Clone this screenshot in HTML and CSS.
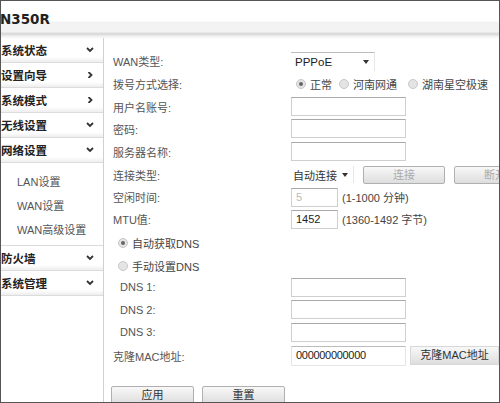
FILE: index.html
```html
<!DOCTYPE html>
<html lang="zh-CN">
<head>
<meta charset="UTF-8">
<link rel="stylesheet" href="styles.css">
</head>
<body>
<div class="frame">
  <div class="header"><span class="logo">N350R</span></div>
  <div class="main">
    <div class="sidebar">
      <div class="menu_item"><span>系统状态</span><svg class="chev" viewBox="0 0 8 6"><polyline points="1,1 4,4 7,1"/></svg></div>
      <div class="menu_item"><span>设置向导</span><svg class="chev" viewBox="0 0 8 6"><polyline points="2.5,0 5.5,3 2.5,6"/></svg></div>
      <div class="menu_item"><span>系统模式</span><svg class="chev" viewBox="0 0 8 6"><polyline points="2.5,0 5.5,3 2.5,6"/></svg></div>
      <div class="menu_item"><span>无线设置</span><svg class="chev" viewBox="0 0 8 6"><polyline points="1,1 4,4 7,1"/></svg></div>
      <div class="menu_item"><span>网络设置</span><svg class="chev" viewBox="0 0 8 6"><polyline points="1,1 4,4 7,1"/></svg></div>
      <div class="submenu">
        <div class="sub_item">LAN设置</div>
        <div class="sub_item">WAN设置</div>
        <div class="sub_item">WAN高级设置</div>
      </div>
      <div class="menu_item"><span>防火墙</span><svg class="chev" viewBox="0 0 8 6"><polyline points="1,1 4,4 7,1"/></svg></div>
      <div class="menu_item"><span>系统管理</span><svg class="chev" viewBox="0 0 8 6"><polyline points="1,1 4,4 7,1"/></svg></div>
    </div>

    <div class="content">
      <div class="row h22">
        <div class="label">WAN类型:</div>
        <div class="select w84"><span>PPPoE</span><span class="arrow"></span></div>
      </div>
      <div class="row h24">
        <div class="label">拨号方式选择:</div>
        <div class="radios">
          <span class="radio checked"></span><span class="rtext">正常</span>
          <span class="radio"></span><span class="rtext">河南网通</span>
          <span class="radio r3"></span><span class="rtext">湖南星空极速</span>
        </div>
      </div>
      <div class="row h21">
        <div class="label">用户名账号:</div>
        <div class="input w113"></div>
      </div>
      <div class="row h23">
        <div class="label">密码:</div>
        <div class="input w113"></div>
      </div>
      <div class="row h23">
        <div class="label">服务器名称:</div>
        <div class="input w113"></div>
      </div>
      <div class="row h23">
        <div class="label">连接类型:</div>
        <div class="select w63 short"><span class="dark">自动连接</span><span class="arrow"></span></div>
        <div class="btn disabled w82">连接</div>
        <div class="btn disabled w82">断开</div>
      </div>
      <div class="row h22">
        <div class="label">空闲时间:</div>
        <div class="input w45 dim">5</div>
        <span class="hint">(1-1000 分钟)</span>
      </div>
      <div class="row h22">
        <div class="label">MTU值:</div>
        <div class="input w45">1452</div>
        <span class="hint">(1360-1492 字节)</span>
      </div>
      <div class="row h25 dns_opt">
        <span class="radio checked"></span><span class="rtext">自动获取DNS</span>
      </div>
      <div class="row h21 dns_opt">
        <span class="radio"></span><span class="rtext">手动设置DNS</span>
      </div>
      <div class="row h22">
        <div class="label indent">DNS 1:</div>
        <div class="input w113"></div>
      </div>
      <div class="row h23">
        <div class="label indent">DNS 2:</div>
        <div class="input w113"></div>
      </div>
      <div class="row h22">
        <div class="label indent">DNS 3:</div>
        <div class="input w113"></div>
      </div>
      <div class="row h25">
        <div class="label">克隆MAC地址:</div>
        <div class="input w113 mac">000000000000</div>
        <div class="btn w89 clone">克隆MAC地址</div>
      </div>
      <div class="actions">
        <div class="btn w83">应用</div>
        <div class="btn w83">重置</div>
      </div>
    </div>
  </div>
</div>
</body>
</html>
```

FILE: styles.css
```css
html, body {
  margin: 0;
  padding: 0;
  background: #fff;
}

.frame {
  width: 498px;
  height: 401px;
  border: 1px solid #555;
  overflow: hidden;
  font-family: "Liberation Sans", "Noto Sans CJK SC", sans-serif;
  font-size: 11px;
  color: #555;
  white-space: nowrap;
}

.header {
  height: 37px;
  background: linear-gradient(#fff 0, #fff 20px, #f3f3f3 21px, #f3f3f3 31px, #dcdcdc 32px, #dcdcdc 34px, #f4f4f4 35px, #f4f4f4 37px);
}

.logo {
  display: block;
  padding-top: 10px;
  margin-left: -1px;
  font-family: "DejaVu Sans", sans-serif;
  font-weight: bold;
  font-size: 13.5px;
  color: #222;
  line-height: 16px;
}

.main {
  display: flex;
  height: 364px;
}

.sidebar {
  width: 102px;
  border-right: 1px solid #d0d0d0;
  flex: none;
}

.menu_item {
  height: 24px;
  border-bottom: 1px solid #dcdcdc;
  background: linear-gradient(#fff 0, #fff 19px, #eeeeee 24px);
  display: flex;
  align-items: center;
  justify-content: space-between;
  font-family: "Noto Sans CJK SC", sans-serif;
  font-weight: bold;
  font-size: 11.5px;
  color: #222;
  padding-right: 9px;
}

.chev {
  width: 8px;
  height: 6px;
  fill: none;
  stroke: #333;
  stroke-width: 1.8;
}

.submenu {
  padding-top: 7px;
  height: 75px;
  border-bottom: 1px solid #dcdcdc;
}

.sub_item {
  height: 24px;
  line-height: 24px;
  padding-left: 16px;
  color: #555;
}

.content {
  flex: 1;
  padding-left: 9px;
  padding-top: 12px;
}

.row {
  display: flex;
  align-items: center;
}

.h21 { height: 21px; }
.h22 { height: 22px; }
.h23 { height: 23px; }
.h24 { height: 24px; }
.h25 { height: 25px; }

.label {
  width: 178px;
  flex: none;
}

.indent {
  padding-left: 7px;
  width: 171px;
}

.input {
  height: 17px;
  border: 1px solid #cfcfcf;
  border-top-color: #a9a9a9;
  background: #fff;
  box-sizing: content-box;
  line-height: 17px;
  padding-left: 4px;
  color: #222;
  font-size: 11px;
}

.w113 { width: 109px; }
.w45 { width: 41px; }
.dim { color: #bbb; }

.mac {
  height: 18px;
  border-color: #e6e6e6;
  border-top-color: #bbb;
  letter-spacing: -0.3px;
}

.select {
  height: 19px;
  border-top: 1px solid #bdbdbd;
  border-right: 1px solid #e6e6e6;
  background: #fff;
  display: flex;
  align-items: center;
  justify-content: space-between;
  padding-left: 4px;
  padding-right: 5px;
  color: #222;
  font-size: 11.5px;
  box-sizing: border-box;
}

.w84 { width: 84px; }
.w63 { width: 63px; }

.short {
  height: 17px;
  border-top: none;
  padding-left: 2px;
  font-size: 11px;
}

.dark {
  color: #333;
}

.arrow {
  width: 0;
  height: 0;
  border-left: 3px solid transparent;
  border-right: 3px solid transparent;
  border-top: 4px solid #333;
}

.radios {
  display: flex;
  align-items: center;
  padding-left: 5px;
}

.radio {
  width: 8px;
  height: 8px;
  border: 1px solid #c8c8c8;
  border-radius: 50%;
  background: #e4e4e4;
  margin-right: 4px;
  position: relative;
  flex: none;
}

.checked::after {
  content: "";
  position: absolute;
  left: 2px;
  top: 2px;
  width: 4px;
  height: 4px;
  border-radius: 50%;
  background: #666;
}

.rtext {
  margin-right: 7px;
  color: #444;
}

.r3 {
  margin-left: 4px;
}

.dns_opt {
  padding-left: 5px;
}

.hint {
  margin-left: 4px;
  color: #444;
}

.btn {
  height: 16px;
  border: 1px solid #b0b0b0;
  border-radius: 2px;
  background: linear-gradient(#f8f8f8, #dedede);
  text-align: center;
  line-height: 16px;
  color: #333;
  flex: none;
  overflow: hidden;
}

.disabled {
  color: #aaa;
  margin-left: 9px;
}

.w82 { width: 80px; }
.w83 { width: 81px; }
.w89 { width: 87px; }

.clone {
  margin-left: 4px;
  height: 17px;
  border-color: #d8d8d8;
  border-radius: 0;
}

.actions {
  display: flex;
  gap: 8px;
  margin-top: 18px;
  margin-left: -2px;
}
```
